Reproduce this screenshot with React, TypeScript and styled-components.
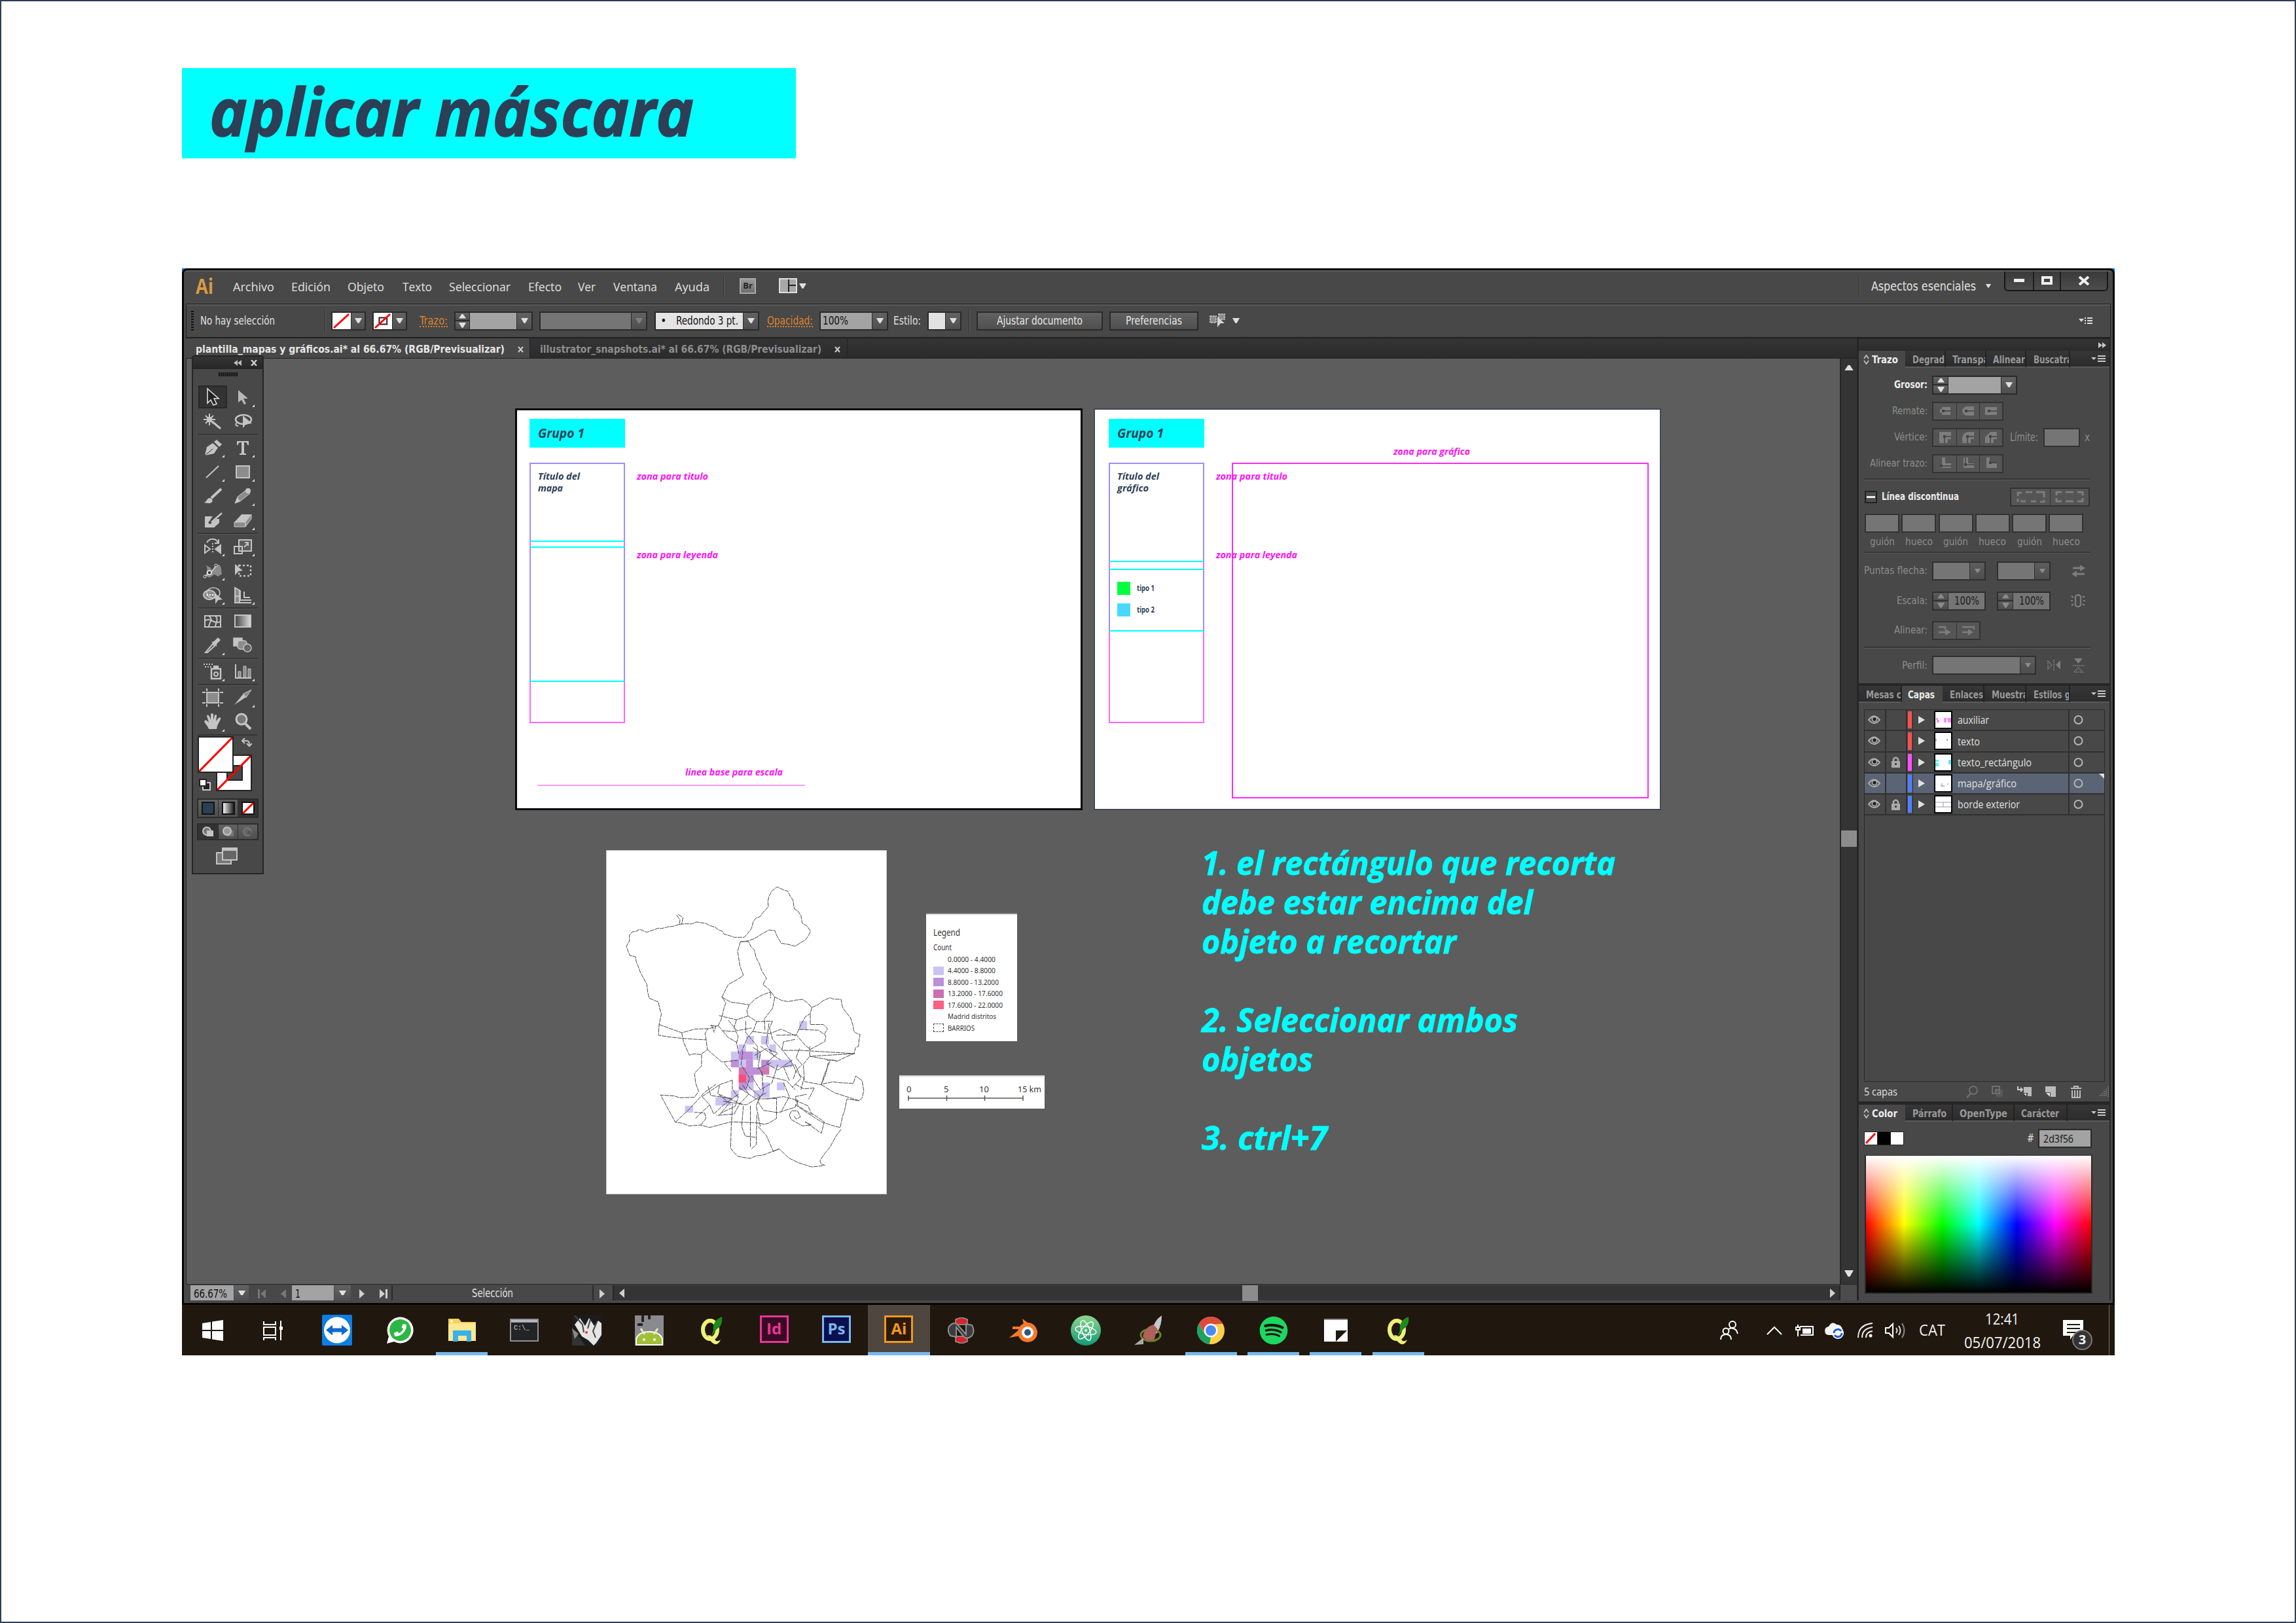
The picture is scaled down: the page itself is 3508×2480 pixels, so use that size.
import React, { useLayoutEffect, useRef, useState } from 'react';
import styled, { createGlobalStyle, css } from 'styled-components';
import { FaSpotify, FaPhoneAlt } from 'react-icons/fa';

const UI = `"DejaVu Sans Condensed", "DejaVu Sans", sans-serif`;
const SEGOE = `"Open Sans", "Noto Sans", sans-serif`;
const HAND = `"Open Sans", "Noto Sans", sans-serif`;
const NAVY = '#2d3f56';
const RAISED = 'linear-gradient(#626262, #4f4f4f)';

const Global = createGlobalStyle`
  html, body { margin: 0; padding: 0; background: #fff; }
  * { box-sizing: border-box; }
  svg { display: block; flex: none; }
`;

/* ---------- text that keeps a given width ---------- */

const FitBox = styled.span<{ $w: number }>`
  display: inline-block;
  flex: none;
  width: ${p => p.$w}px;
  white-space: nowrap;
  line-height: 1.2;
`;
const FitInner = styled.span`
  display: inline-block;
  transform-origin: 0 50%;
`;
function Fit({ w, children }: { w: number; children: React.ReactNode }) {
  const ref = useRef<HTMLSpanElement>(null);
  const [scale, setScale] = useState(1);
  useLayoutEffect(() => {
    const natural = ref.current!.getBoundingClientRect().width;
    if (natural > 0) setScale(w / natural);
  }, []);
  return (
    <FitBox $w={w}>
      <FitInner ref={ref} style={{ transform: `scaleX(${scale})` }}>{children}</FitInner>
    </FitBox>
  );
}

/* ---------- page ---------- */

const Page = styled.main`
  width: 3508px;
  height: 2480px;
  border: 2px solid ${NAVY};
  background: #fff;
  padding: 102px 0 0 276px;
  overflow: hidden;
`;
const Heading = styled.h1`
  margin: 0 0 168px;
  width: 938px;
  height: 138px;
  padding: 0 0 7px 42px;
  background: #00ffff;
  color: ${NAVY};
  display: flex;
  align-items: center;
  font: italic 700 101px ${HAND};
  -webkit-text-stroke: 1.5px ${NAVY};
`;
const Screen = styled.section`
  width: 2953px;
  height: 1661px;
  display: flex;
  flex-direction: column;
  font: 17px ${UI};
  color: #e0e0e0;
`;
const AppWindow = styled.div`
  height: 1584px;
  background: #484848;
  border: 3px solid #050505;
  border-top-left-radius: 8px;
  border-top-right-radius: 8px;
  display: flex;
  flex-direction: column;
  padding: 0 3px 5px;
`;
const Desk = styled.div`background: #0078d7; height: 1584px;`;

/* ---------- menu bar ---------- */

const MenuBar = styled.div`
  height: 51px;
  flex: none;
  margin: 0 -3px;
  padding: 0 0 5px 18px;
  display: flex;
  align-items: center;
  border-top: 2px solid #5e5e5e;
  border-top-left-radius: 6px;
  border-top-right-radius: 6px;
  font: 18.5px ${SEGOE};
`;
const AiLogo = styled.span`
  width: 57px;
  color: #d99a45;
  font: 700 33px ${SEGOE};
  line-height: 1;
`;
const MenuItem = styled.span<{ $w: number }>`width: ${p => p.$w}px; flex: none;`;
const VRule = styled.i<{ $h: number; $m: string }>`
  flex: none;
  width: 2px;
  height: ${p => p.$h}px;
  margin: ${p => p.$m};
  background: #353535;
  border-right: 1px solid #5c5c5c;
`;
const BridgeIcon = styled.span`
  width: 25px;
  height: 24px;
  background: linear-gradient(#989898, #6e6e6e);
  border: 2px solid #a9a9a9;
  color: #222;
  font: 700 13px/19px ${SEGOE};
  text-align: center;
`;
const Workspace = styled.span`margin-left: 17px; width: 175px; font: 19px ${UI};`;
const WinButtons = styled.div`
  display: flex;
  width: 159px;
  height: 30px;
  margin: -14px 0 0 20px;
  background: linear-gradient(#3a3a3a, #4c4c4c);
  border: 2px solid #171717;
  border-top: 0;
  border-radius: 0 0 6px 6px;
`;
const WinButton = styled.span<{ $w: number }>`
  width: ${p => p.$w}px;
  display: flex;
  align-items: center;
  justify-content: center;
  & + & { border-left: 2px solid #1d1d1d; }
`;

/* ---------- control bar ---------- */

const ControlBar = styled.div`
  height: 53px;
  flex: none;
  border: 1px solid #202020;
  border-bottom-width: 2px;
  box-shadow: inset 0 2px #5b5b5b;
  padding-left: 7px;
  display: flex;
  align-items: center;
`;
const Grip = styled.i`
  width: 4px;
  height: 30px;
  background: repeating-linear-gradient(#111 0 2px, #484848 2px 4px);
`;
const Spacer = styled.i<{ $w: number }>`flex: none; width: ${p => p.$w}px;`;
const OrangeLabel = styled.span`
  color: #dd832b;
  border-bottom: 2px dotted #dd832b;
  line-height: 1;
  height: 20px;
`;
const ComboBox = styled.span<{ $w: number; $h?: number; $dim?: boolean }>`
  flex: none;
  width: ${p => p.$w}px;
  height: ${p => p.$h ?? 29}px;
  display: flex;
  border: 2px solid #2a2a2a;
  background: #2a2a2a;
  opacity: ${p => (p.$dim ? 0.82 : 1)};
`;
const Field = styled.span<{ $bg: string; $c?: string }>`
  flex: 1;
  min-width: 0;
  display: flex;
  align-items: center;
  justify-content: center;
  background: ${p => p.$bg};
  color: ${p => p.$c ?? '#111'};
`;
const ArrowBtn = styled.span<{ $w?: number }>`
  width: ${p => p.$w ?? 22}px;
  flex: none;
  margin-left: 1px;
  display: flex;
  align-items: center;
  justify-content: center;
  background: ${RAISED};
`;
const SpinCol = styled.span<{ $w?: number }>`
  width: ${p => p.$w ?? 21}px;
  margin-right: 1px;
  display: flex;
  flex-direction: column;
  gap: 2px;
`;
const SpinHalf = styled.span`
  flex: 1;
  display: flex;
  align-items: center;
  justify-content: center;
  background: ${RAISED};
`;
const PushButton = styled.button<{ $w: number }>`
  width: ${p => p.$w}px;
  height: 29px;
  flex: none;
  margin: 0;
  padding: 0;
  border: 2px solid #2a2a2a;
  background: ${RAISED};
  color: #e6e6e6;
  font: 17px ${UI};
  display: flex;
  align-items: center;
  justify-content: center;
`;

const Down = ({ c = '#e0e0e0', w = 11 }: { c?: string; w?: number }) => (
  <svg width={w} height={w * 0.7} viewBox="0 0 10 7"><path d="M0 0h10L6 7H4z" fill={c} /></svg>
);
const Up = ({ c = '#e0e0e0', w = 11 }: { c?: string; w?: number }) => (
  <svg width={w} height={w * 0.6} viewBox="0 0 10 6"><path d="M0 6h10L6 0H4z" fill={c} /></svg>
);
const SideArrow = ({ left, c = '#d0d0d0', bar }: { left?: boolean; c?: string; bar?: boolean }) => (
  <svg width="14" height="14" viewBox="0 0 14 14">
    <g transform={left ? 'matrix(-1 0 0 1 14 0)' : undefined} fill={c}>
      <path d="M1 0l8 7-8 7z" />{bar && <path d="M10 0h3v14h-3z" />}
    </g>
  </svg>
);
const NoneSwatch = ({ w, h, hole }: { w: number; h: number; hole?: boolean }) => (
  <svg width={w} height={h} viewBox={`0 0 ${w} ${h}`}>
    <rect width={w} height={h} fill="#fff" />
    {hole && <rect x={w * 0.3} y={h * 0.3} width={w * 0.42} height={h * 0.4} fill="none" stroke="#222" strokeWidth="2" />}
    <path d={`M2 ${h - 2}L${w - 3} 2`} stroke="#f00" strokeWidth="3" />
  </svg>
);
const Spinner = ({ w, c }: { w?: number; c?: string }) => (
  <SpinCol $w={w}>
    <SpinHalf><Up c={c} /></SpinHalf>
    <SpinHalf><Down c={c} /></SpinHalf>
  </SpinCol>
);

function Menu() {
  const items: [string, number, number][] = [
    ['Archivo', 63, 89], ['Edición', 60, 86], ['Objeto', 56, 84], ['Texto', 45, 71], ['Seleccionar', 94, 121],
    ['Efecto', 51, 76], ['Ver', 27, 54], ['Ventana', 67, 94], ['Ayuda', 53, 73],
  ];
  return (
    <MenuBar>
      <AiLogo><Fit w={27}>Ai</Fit></AiLogo>
      {items.map(([t, w, slot]) => <MenuItem key={t} $w={slot}><Fit w={w}>{t}</Fit></MenuItem>)}
      <VRule $h={31} $m="0 23px 0 1px" />
      <BridgeIcon>Br</BridgeIcon>
      <Spacer $w={35} />
      <svg width="28" height="24" viewBox="0 0 28 24">
        <path d="M1 1h26v21H1zM15 1v21M15 11h12" fill="#a8a8a8" stroke="#222" strokeWidth="2" />
        <path d="M1 1h26v21H1z" fill="none" stroke="#ddd" strokeWidth="2" />
      </svg>
      <Spacer $w={3} />
      <Down />
      <Spacer $w={1608} />
      <VRule $h={31} $m="0" />
      <Workspace><Fit w={160}>Aspectos esenciales</Fit></Workspace>
      <Down w={8} />
      <WinButtons>
        <WinButton $w={43}><svg width="16" height="6"><rect width="16" height="5" fill="#eee" /></svg></WinButton>
        <WinButton $w={42}><svg width="17" height="14"><rect x="2" y="2" width="13" height="9" fill="none" stroke="#eee" strokeWidth="4" /></svg></WinButton>
        <WinButton $w={74}><svg width="18" height="14"><path d="M2 1l14 12M16 1L2 13" stroke="#eee" strokeWidth="4" /></svg></WinButton>
      </WinButtons>
    </MenuBar>
  );
}

function Controls() {
  return (
    <ControlBar>
      <Grip /><Spacer $w={10} />
      <Fit w={114}>No hay selección</Fit>
      <VRule $h={38} $m="0 8px 0 76px" />
      <ComboBox $w={53}><NoneSwatch w={28} h={25} /><ArrowBtn $w={20}><Down /></ArrowBtn></ComboBox>
      <Spacer $w={10} />
      <ComboBox $w={53}><NoneSwatch w={28} h={25} hole /><ArrowBtn $w={20}><Down /></ArrowBtn></ComboBox>
      <Spacer $w={19} />
      <OrangeLabel><Fit w={43}>Trazo:</Fit></OrangeLabel>
      <Spacer $w={10} />
      <ComboBox $w={120}><Spinner /><Field $bg="#a3a3a3" /><ArrowBtn><Down /></ArrowBtn></ComboBox>
      <Spacer $w={10} />
      <ComboBox $w={165}><Field $bg="#757575" /><ArrowBtn><Down c="#808080" /></ArrowBtn></ComboBox>
      <Spacer $w={11} />
      <ComboBox $w={160}>
        <Field $bg="#e4e4e4">•&nbsp;&nbsp;&nbsp;<Fit w={95}>Redondo 3 pt.</Fit></Field><ArrowBtn><Down /></ArrowBtn>
      </ComboBox>
      <Spacer $w={12} />
      <OrangeLabel><Fit w={70}>Opacidad:</Fit></OrangeLabel>
      <Spacer $w={10} />
      <ComboBox $w={105}><Field $bg="#a3a3a3"><Fit w={39}>100%</Fit><Spacer $w={34} /></Field><ArrowBtn><Down /></ArrowBtn></ComboBox>
      <Spacer $w={8} />
      <Fit w={42}>Estilo:</Fit>
      <Spacer $w={10} />
      <ComboBox $w={52}><Field $bg="#e2e2e2" /><ArrowBtn><Down /></ArrowBtn></ComboBox>
      <VRule $h={38} $m="0 10px 0 11px" />
      <PushButton $w={193}><Fit w={131}>Ajustar documento</Fit></PushButton>
      <Spacer $w={10} />
      <PushButton $w={136}><Fit w={86}>Preferencias</Fit></PushButton>
      <Spacer $w={16} />
      <svg width="27" height="26" viewBox="0 0 27 26">
        <path d="M2 6h9v10H2zM15 3h9v8h-9z" fill="#8a8a8a" stroke="#ccc" strokeWidth="1.5" strokeDasharray="3 1" />
        <path d="M13 7l11 10h-6l-5 6z" fill="#d5d5d5" />
      </svg>
      <Spacer $w={9} />
      <Down />
      <Spacer $w={1282} />
      <svg width="22" height="12" viewBox="0 0 22 12"><path d="M0 3h8L4 8zM9 1h2v2H9zM9 5h2v2H9zM9 9h2v2H9zM13 1h8v2h-8zM13 5h8v2h-8zM13 9h8v2h-8z" fill="#ddd" /></svg>
    </ControlBar>
  );
}

/* ---------- document area ---------- */

const Body = styled.div`display: flex; height: 1470px; flex: none; background: #2a2a2a;`;
const Document = styled.div`width: 2553px; display: flex; flex-direction: column;`;
const TabBar = styled.div`
  height: 31px;
  flex: none;
  display: flex;
  background: linear-gradient(#343434, #2b2b2b);
  border-bottom: 1px solid #222;
`;
const DocTab = styled.div<{ $w: number; $on?: boolean }>`
  width: ${p => p.$w}px;
  padding: 3px 0 0 15px;
  display: flex;
  align-items: center;
  gap: 20px;
  font-weight: 700;
  font-size: 16px;
  color: ${p => (p.$on ? '#e6e6e6' : '#8e8e8e')};
  background: ${p => (p.$on ? '#484848' : 'transparent')};
  border-right: 1px solid #222;
`;
const CanvasRow = styled.div`display: flex; height: 1414px;`;
const Canvas = styled.div`position: relative; width: 2527px; background: #5d5d5d; border-left: 1px solid #222;`;
const VScroll = styled.div`
  width: 26px;
  background: #343434;
  border-left: 2px solid #262626;
  display: flex;
  flex-direction: column;
  align-items: center;
  padding: 10px 0;
`;
const VThumb = styled.i`width: 24px; height: 25px; margin: 703px 0 647px; background: #8c8c8c;`;
const StatusBar = styled.div`
  height: 25px;
  display: flex;
  align-items: stretch;
  background: #484848;
  border-top: 1px solid #262626;
  padding: 1px 0 0 7px;
`;
const StatusField = styled.span<{ $w: number }>`
  width: ${p => p.$w}px;
  background: #a3a3a3;
  color: #111;
  display: flex;
  align-items: center;
  padding: 4px 0 0 5px;
`;
const StatusCell = styled.span<{ $w: number; $line?: boolean }>`
  width: ${p => p.$w}px;
  display: flex;
  align-items: center;
  justify-content: center;
  padding-top: 2px;
  ${p => p.$line && css`border-left: 2px solid #2a2a2a;`}
`;
const HScroll = styled.div`
  flex: 1;
  display: flex;
  align-items: center;
  background: #343434;
  border-left: 2px solid #262626;
  padding-left: 3px;
`;
const HThumb = styled.i`width: 24px; height: 24px; margin: 0 873px 0 943px; background: #8c8c8c;`;
const Corner = styled.i`width: 27px; background: #4c4c4c; border-left: 2px solid #262626;`;

/* artboards sit freely on the canvas */
type Box = { $x: number; $y: number; $w: number; $h: number };
const placed = css<Box>`
  position: absolute;
  left: ${p => p.$x}px;
  top: ${p => p.$y}px;
  width: ${p => p.$w}px;
  height: ${p => p.$h}px;
`;
const Artboard = styled.div<Box & { $edge: string }>`${placed} background: #fff; border: ${p => p.$edge};`;
const Frame = styled.div<Box & { $c: string; $side?: string }>`
  ${placed}
  border: 2px solid ${p => p.$c};
  border-left-color: ${p => p.$side ?? p.$c};
  border-right-color: ${p => p.$side ?? p.$c};
`;
const TopEdge = styled.i<{ $x: number; $y: number }>`
  position: absolute;
  left: ${p => p.$x}px;
  top: ${p => p.$y}px;
  width: 146px;
  height: 2px;
  background: #a08bff;
`;
const GroupTag = styled.div<Box>`
  ${placed}
  background: #00ffff;
  color: ${NAVY};
  display: flex;
  align-items: center;
  padding-left: 13px;
  font: italic 700 19px ${HAND};
`;
const Caption = styled.div<{ $x: number; $y: number; $c?: string }>`
  position: absolute;
  left: ${p => p.$x}px;
  top: ${p => p.$y - 10}px;
  color: ${p => p.$c ?? '#ff12f5'};
  font: italic 700 15px/17px ${HAND};
  white-space: nowrap;
  display: flex;
  flex-direction: column;
`;
const Baseline = styled.i<{ $x: number; $y: number; $w: number }>`
  position: absolute;
  left: ${p => p.$x}px;
  top: ${p => p.$y}px;
  width: ${p => p.$w}px;
  height: 2px;
  background: #ff9bfb;
`;
const KeyList = styled.div`
  position: absolute;
  left: 34px;
  top: 263px;
  display: flex;
  flex-direction: column;
  gap: 13px;
  color: ${NAVY};
  font: 700 12px ${HAND};
`;
const KeyRow = styled.div`display: flex; align-items: center; gap: 10px; height: 20px;`;
const KeySwatch = styled.i<{ $c: string }>`width: 20px; height: 20px; background: ${p => p.$c};`;
const Steps = styled.div`
  position: absolute;
  left: 1551px;
  top: 740px;
  color: #00ffff;
  font: italic 700 50px/60px ${HAND};
  -webkit-text-stroke: 0.8px #00ffff;
  display: flex;
  flex-direction: column;
`;
const Step = styled.div`height: 60px; display: flex; align-items: center;`;

const MapSheet = styled.div`
  position: absolute;
  left: 641px;
  top: 751px;
  width: 429px;
  height: 526px;
  background: #fff;
  border: 1px solid #c8c8c8;
`;
const LegendCard = styled.div`
  position: absolute;
  left: 1130px;
  top: 847px;
  width: 139px;
  height: 196px;
  background: #fff;
  border-top: 2px solid #888;
  padding: 18px 0 0 11px;
  color: #333;
  font: 11.5px "Noto Sans", sans-serif;
`;
const LegendTitle = styled.div<{ $s: number; $h: number }>`
  font-size: ${p => p.$s}px;
  height: ${p => p.$h}px;
`;
const LegendRow = styled.div`height: 17.5px; display: flex; align-items: center; gap: 6px;`;
const LegendSwatch = styled.i<{ $c: string; $b?: string }>`
  width: 16px;
  height: 13px;
  background: ${p => p.$c};
  border: ${p => p.$b ?? 'none'};
`;
const ScaleCard = styled.div`
  position: absolute;
  left: 1089px;
  top: 1095px;
  width: 222px;
  height: 51px;
  background: #fff;
  border-top: 2px solid #ccc;
  color: #333;
  font: 13px "Noto Sans", sans-serif;
  padding: 11px 0 0 11px;
`;
const ScaleLabels = styled.div`display: flex; align-items: center; height: 18px;`;
const ScaleLabel = styled.span<{ $w: number }>`width: ${p => p.$w}px; line-height: 1.2;`;

const CELLS: [number, number, number, number, string][] = [
  [674, 770, 27, 38, '#b9acef'], [492, 835, 26, 37, '#b9acef'], [543, 835, 27, 37, '#b9acef'], [465, 872, 26, 34, '#b9acef'],
  [571, 872, 23, 34, '#b9acef'], [439, 903, 28, 36, '#b9acef'], [466, 903, 48, 36, '#a266cb'], [514, 903, 27, 36, '#b9acef'],
  [439, 939, 28, 33, '#a266cb'], [467, 939, 24, 33, '#b9acef'], [491, 939, 24, 33, '#a266cb'], [543, 939, 28, 33, '#a266cb'],
  [571, 939, 78, 33, '#b9acef'], [466, 972, 25, 32, '#c04099'], [491, 972, 52, 32, '#a266cb'], [543, 972, 28, 32, '#c04099'],
  [466, 1004, 25, 34, '#fb2a5f'], [491, 1004, 26, 34, '#a266cb'], [466, 1038, 26, 34, '#a266cb'], [492, 1038, 25, 34, '#b9acef'],
  [544, 1038, 28, 34, '#b9acef'], [597, 1038, 27, 34, '#b9acef'], [439, 1072, 27, 32, '#b9acef'], [518, 1072, 54, 32, '#b9acef'],
  [386, 1103, 54, 36, '#b9acef'], [281, 1140, 28, 30, '#b9acef'],
];
const BORDERS = [
  'M262 347l-22 9-20 3-20 7-10-2-40 18-12-6-13-7-14 10-11 1-10 15v25l-6 12-4 13 6 22 6 17 18 4 4 24 6 18 8 28 5 12 17 40 3 34 5 26 32 17 4 28 6 25-8 45-2 47 40 8 40 5 40 4 45 3',
  'M262 347l21-2 20 1 17-9 32 6 15 10 18 7 12 12 13 6 5 12 18 6 17 8h35l10-14 15-25 6-30 9-15 14-6 10-18 19-26-2-22 4-23 10-24 18-17 20 12 17 7 8 22 9 15 5 40 12 8 11 22 4 32 16 12 13 24-8 20-10 17-18 14-17 14-24-8-24-5-14-30-8-25-20-3-25 18-25 20-24 10-24 3',
  'M252 306l12 22-2 19M258 304l16 14-4 28',
  'M472 423l-10 42 4 30 4 35 12 40-20 18-32 22-12 30-10 25 14 25-6 20-6 30-4 22-11 28',
  'M472 423h28l8 22 12 15 5 30 12 30 8 30 17 35-8 12-4 15 12 10 13 18 15 25 22 14 23 6 24-6 26-4 14 12 18 23 20-10 20-20 23-12 12 6 26 1 3 26 4 14 12 20 13 20 8 30 4 30 11 10 10 3-4 30-1 22-10 6-6 26-30 16-27 17-20-6-15 4',
  'M408 665l30 22 34 6 30 6 20-25 25-18 30-14M502 699l-8 25 4 24 30 24 54-2M590 665l-8 50-28 45 2 50M498 748l-40 16-60-18M458 764l-8 36 14 36-6 34',
  'M717 710l-5 28-16 12-14 30-18 50 28 42 20 22 50-35 4-25-26-24-70-4M712 740v45h45l14 18-10 24M664 830l-70 2M528 772l-12 40-20 30-20 60M582 770l-10 30 10 50 34 46 30 50 20 50',
  'M192 785l78 36 45-16 50-2 30-13M270 821l6 40 20 58 16-6 24 3 22-22-4-42-4-28 10-22M338 916v50l-20 26-4 10 4 40 10 35-14 26-50 2-20-8-47-4 51 119 24 4 23 12 40-4 30 11 75-25 45 2 45 3 25 6 15-6 26-20v-90',
  'M358 894l50 55 55-8M372 786l10 34M368 790h20l-6 22M395 790l16 22 42 4M620 898h60l185 14-155 12 95 21M710 880v44l-22 35 4 75 58 14 16-50 8-50',
  'M755 1045l35-10 30 5 40 2 8-32 22 20 6 45-6 30-10 13-42-8-8 50-8 30-7 45-30-10-35-15-50-40-40-35M750 1048l45 35 85 35',
  'M818 1243l-18 30-20 47-18 28-17 32 4 14 13 6-20 4-26 3-24-10-22-9-32-20-33-40-28 14-27 13-25 4-20 11-22-4-21-6-14-18-10-17 2-90 5-105M605 1328l-20 12-24-70-30-42',
  'M340 1100l60-52 44-20M340 1100l26 36-50 60M248 1212l50-60 50-70 40-36M366 1136l14 40 34-40 50-46M335 1224l18-28-4-24-36-4',
  'M360 1055l10 40 76 14M400 1048l-6 40 40 40-36 54M444 1028v40l20 34-10 40-50 30M480 1050l20 40-30 40-20 46-60 6',
  'M506 1140v180M528 1180l-2 130-16 18M482 1140l-6 90 12 42 38 6M540 1230l-14-90 14-40-34-36-24-40',
  'M520 920l40-30 40 20-40 44 40 30 50-44M540 880l70 60M530 980l50-30M600 960l-20 80-40 30-30-60M560 1010l70 20 30 40M545 990l6 90-20 40 20 40 50 10',
  'M575 640v30M620 1040l20 60-30 70M560 1110l60-10 50 16-10 30-60 24M640 1030l-20-60 40-10 20 60-30 40M660 1046l30 20 36-4-20 50',
  'M640 1180l6 20 40 28 30-4-22-14 56 50 10-50-46-40-10-30-44-24M640 1180l8-18h20l10 26-14 10-10-16',
  'M675 890l-12 40 20 30-20 26-10 40M660 850l-40 10-6 40M780 945l-20 60-10 42M512 815l60 10 40-20 50 30M570 780l-10 90 30 60M490 770v50l40 60v60',
  'M440 990l-20-30-2-10M480 900l-6 60 30 60-14 50M515 885l26 22-8 60 18 44M466 1060l60 50 70-2M412 1120l80 16 70-54M398 1090l80 44',
  'M410 812l20 30 28 20 8 50M430 766l30 46 50-12M670 1000l20 20-10 50M720 1180l-50-40-10-40 40-10',
];

function CityMap() {
  return (
    <svg width="427" height="524" viewBox="12 26 961 1498" preserveAspectRatio="none">
      {CELLS.map(([x, y, w, h, c], i) => <rect key={i} x={x} y={y} width={w} height={h} fill={c} fillOpacity=".72" />)}
      <g fill="none" stroke="#484848" strokeWidth="1" strokeDasharray="7 1" strokeLinejoin="round">
        {BORDERS.map((d, i) => <path key={i} d={d} vectorEffect="non-scaling-stroke" />)}
      </g>
      <rect x="466" y="1004" width="25" height="34" fill="#fb4f78" />
    </svg>
  );
}

/* ---------- floating toolbox ---------- */

const Toolbox = styled.div`
  position: absolute;
  left: 8px;
  top: -5px;
  width: 110px;
  height: 793px;
  background: #484848;
  border: 2px solid #252525;
  border-radius: 4px 4px 0 0;
  display: flex;
  flex-direction: column;
  align-items: center;
`;
const ToolboxHead = styled.div`
  align-self: stretch;
  height: 19px;
  flex: none;
  background: linear-gradient(#343434, #262626);
  display: flex;
  align-items: center;
  justify-content: flex-end;
  gap: 14px;
  padding-right: 8px;
`;
const ToolboxGrip = styled.i`
  width: 29px;
  height: 6px;
  margin: 5px 0 13px;
  flex: none;
  background: repeating-linear-gradient(90deg, #111 0 2px, #484848 2px 3px);
`;
const ToolGroup = styled.div`
  display: grid;
  grid-template-columns: 46px 46px;
  grid-auto-rows: 37px;
  flex: none;
  padding-bottom: 1px;
  & + & { border-top: 2px solid #363636; box-shadow: inset 0 1px #565656; }
`;
const Tool = styled.span<{ $on?: boolean }>`
  position: relative;
  display: flex;
  align-items: center;
  justify-content: center;
  ${p => p.$on && css`background: #333; box-shadow: inset 0 0 0 2px #282828; margin: 1px;`}
`;
const More = styled.i`
  position: absolute;
  right: 5px;
  bottom: 3px;
  border: 2px solid transparent;
  border-right-color: #ddd;
  border-bottom-color: #ddd;
`;
const Paint = styled.div`
  position: relative;
  width: 92px;
  height: 96px;
  flex: none;
  border-top: 2px solid #363636;
`;
const FillSq = styled.div<{ $x: number; $y: number }>`
  position: absolute;
  left: ${p => p.$x}px;
  top: ${p => p.$y}px;
  border: 2px solid #222;
`;
const Glyph = styled.div<{ $x: number; $y: number }>`position: absolute; left: ${p => p.$x}px; top: ${p => p.$y}px;`;
const ModeRow = styled.div<{ $h: number; $mt: number }>`
  display: flex;
  flex: none;
  height: ${p => p.$h}px;
  margin-top: ${p => p.$mt}px;
  border: 2px solid #2c2c2c;
`;
const Mode = styled.span<{ $on?: boolean }>`
  width: 30px;
  display: flex;
  align-items: center;
  justify-content: center;
  background: ${p => (p.$on ? '#333' : RAISED)};
  & + & { border-left: 1px solid #2c2c2c; }
`;
const ScreenMode = styled.div`margin: 11px 4px 0 0;`;

const L = '#c4c4c4';
const M = '#8c8c8c';
const TOOL_ART: Record<string, React.ReactNode> = {
  select: <path d="M-8-13V9l5-5 4 8 5-2-4-8h7z" fill="#222" stroke="#ddd" strokeWidth="1.6" />,
  direct: <path d="M-7-11V8l5-4 4 7 3-1-4-8h7z" fill="#b8b8b8" />,
  wand: <g stroke={L}><path d="M-1 0L12 11" strokeWidth="3" /><path d="M-5-12V6M-14-3H4M-11-9l12 12M-11 3L1-9" strokeWidth="2" /><circle cx="-5" cy="-3" r="4" fill={L} /></g>,
  lasso: <g><ellipse cx="1" cy="-3" rx="12" ry="7" fill="none" stroke={L} strokeWidth="2.5" /><path d="M-9 2c-4 3 0 6 2 4" stroke={L} fill="none" strokeWidth="2" /><path d="M0-9V10l5-6 9-1z" fill={L} /></g>,
  pen: <g><path d="M-12 12l3-13 9-6 8 7-6 9z" fill={L} /><path d="M2-9l4-3 8 7-4 4z" fill={L} /><path d="M-12 12L0 2" stroke="#333" /></g>,
  type: <path d="M-9-10H9v6H7c0-3-1-4-4-4H2V7c0 2 1 2 3 2v2H-5V9c2 0 3 0 3-2V-8h-1c-3 0-4 1-4 4h-2z" fill={L} />,
  line: <path d="M-10 9L9-9" stroke={L} strokeWidth="2" />,
  rect: <rect x="-10" y="-9" width="20" height="18" fill={M} stroke={L} strokeWidth="2" />,
  brush: <g><path d="M-2 3L13-11" stroke={L} strokeWidth="4" /><path d="M-14 10c5 0 5-8 10-7s5 8-2 8z" fill={L} /></g>,
  pencil: <g><path d="M-12 11l4-10L6-10l5 6L-4 8z" fill={M} stroke={L} /><circle cx="8" cy="-8" r="4" fill={L} /><path d="M-12 11l4-9 4 6z" fill={L} /></g>,
  blob: <g><path d="M-12-6h12L-7 4l3 2 10-8h4v6L2 11h-14z" fill={L} /><path d="M14-11L-2 3" stroke={L} strokeWidth="2.5" /></g>,
  eraser: <g><path d="M-13 3L-2-9h15L4 3z" fill={L} /><path d="M-13 3H4v7h-17zM4 3l9-12v7L4 10z" fill={M} stroke={L} /></g>,
  rotate: <g fill="none" stroke={L} strokeWidth="2"><path d="M-9-6c4-7 14-7 17 0M9-11v6h-6" /><path d="M-12-2l8 6-8 6z" /><path d="M12-2L4 4l8 6z" fill={L} /><path d="M0-5v16" strokeDasharray="2 2" /></g>,
  scale: <g fill="#5c5c5c" stroke={L} strokeWidth="2"><rect x="-6" y="-10" width="19" height="17" /><rect x="-13" y="0" width="12" height="11" fill="none" /><path d="M2 1l6-6M3-6h5v5" fill="none" /></g>,
  width: <g><path d="M-11-9c5 4 9 3 9 8 5 3 5-8 11-8 4 0 4 8 5 14l-6 4c-6-5-6-3-10 0s-8 0-8-4 4-8-1-14z" fill={M} /><path d="M-12 9C-8 4-2 6 5-8" stroke={L} strokeWidth="2" fill="none" /><circle cx="-5" cy="3" r="3" fill="#333" stroke="#eee" strokeWidth="1.5" /><circle cx="5" cy="-8" r="2" fill="#333" stroke="#eee" /><circle cx="-12" cy="9" r="2" fill="#333" stroke="#eee" /></g>,
  free: <g><rect x="-6" y="-8" width="18" height="16" fill="none" stroke={L} strokeWidth="2.5" strokeDasharray="3 3" /><path d="M-12-10L0 0l-7 1-5 6z" fill={L} /></g>,
  builder: <g><ellipse cx="-5" cy="0" rx="9" ry="7" fill={M} stroke={L} strokeWidth="2" /><ellipse cx="1" cy="-3" rx="10" ry="8" fill="none" stroke={L} strokeWidth="1.5" /><path d="M-9 0H4" stroke="#fff" strokeWidth="2" strokeDasharray="2 2" /><path d="M4-2l11 9-7 1-4 6z" fill={L} /></g>,
  persp: <g fill="none" stroke={L} strokeWidth="2"><path d="M-4-7V8h17M2-5V4h9M-13 12H13" /><path d="M-12-11l7 4V12h-7z" fill={M} /><path d="M-12 2h7" /></g>,
  mesh: <g fill="none" stroke={L} strokeWidth="2"><rect x="-12" y="-8" width="24" height="17" /><path d="M-12 0c8-8 16 8 24 0M-6-8c8 6 0 10 0 17M4-8c6 6 0 10 0 17" /></g>,
  eyedrop: <g><path d="M-11 11L0-2l3 3L-8 11z" fill="none" stroke={L} strokeWidth="2" /><path d="M-2-5l4-1 6-6 4 4-6 6v4z" fill={L} /></g>,
  blend: <g stroke={L} strokeWidth="1.5"><rect x="-14" y="-11" width="13" height="12" fill={L} /><rect x="-8" y="-7" width="14" height="13" rx="4" fill={M} /><ellipse cx="7" cy="4" rx="6" ry="6" fill="#666" /></g>,
  spray: <g><rect x="-2" y="-4" width="14" height="15" fill="none" stroke={L} strokeWidth="2.5" /><path d="M1-9h8v4H1z" fill={L} /><circle cx="5" cy="4" r="3" fill="none" stroke={L} strokeWidth="2" /><path d="M-14-11h14M-12-7H0" stroke={L} strokeWidth="2" strokeDasharray="2 2" /></g>,
  graph: <g><path d="M-11-11V10H13" fill="none" stroke={L} strokeWidth="2" /><path d="M-7 0h4v9h-4zM1-8h4V9H1zM8-4h4V9H8z" fill={M} stroke={L} /></g>,
  board: <g stroke={L} strokeWidth="2"><path d="M-16-8h5M11-8h5M-16 8h5M11 8h5M-9-14v4M9-14v4M-9 10v4M9 10v4" /><rect x="-9" y="-8" width="18" height="16" fill={M} /></g>,
  slice: <g><path d="M-13 11L1-6l4 5z" fill={L} /><path d="M1-6l12-6L5 0z" fill={M} stroke={L} /></g>,
  hand: <path d="M-6 11C-8 5-15 0-12-2s5 3 6 3l-3-10c1-3 3-1 4 1l2 5V-11c1-3 4-2 4 0v8l2-7c1-2 4-1 3 1L5-1l4-5c2-2 4 0 3 2L7 6l-1 5z" fill={L} />,
  zoom: <g><ellipse cx="-2" cy="-4" rx="8" ry="8" fill="#777" stroke={L} strokeWidth="3" /><path d="M4 3l8 8" stroke={L} strokeWidth="4" /></g>,
};
const GradientTool = () => (
  <svg width="26" height="20">
    <defs><linearGradient id="grad"><stop stopColor="#444" /><stop offset="1" stopColor="#ddd" /></linearGradient></defs>
    <rect x="1" y="1" width="24" height="18" fill="url(#grad)" stroke={L} strokeWidth="2" />
  </svg>
);
const GROUPS = [
  ['select', 'direct+', 'wand', 'lasso'],
  ['pen+', 'type+', 'line+', 'rect+', 'brush', 'pencil+', 'blob', 'eraser+'],
  ['rotate+', 'scale+', 'width+', 'free', 'builder+', 'persp+'],
  ['mesh', 'gradient', 'eyedrop+', 'blend'],
  ['spray+', 'graph+'],
  ['board', 'slice+', 'hand+', 'zoom'],
];

function Tools() {
  return (
    <Toolbox>
      <ToolboxHead>
        <svg width="12" height="9"><path d="M6 0L0 4.500l6 4.500zM12 0L6 4.500l6 4.500z" fill="#bbb" /></svg>
        <svg width="10" height="9"><path d="M1 0l8 9M9 0L1 9" stroke="#ccc" strokeWidth="2.500" /></svg>
      </ToolboxHead>
      <ToolboxGrip />
      {GROUPS.map((g, i) => (
        <ToolGroup key={i}>
          {g.map(name => {
            const key = name.replace('+', '');
            return (
              <Tool key={key} $on={key === 'select'}>
                {key === 'gradient' ? <GradientTool /> : <svg width="32" height="30" viewBox="-16 -15 32 30">{TOOL_ART[key]}</svg>}
                {name.endsWith('+') && <More />}
              </Tool>
            );
          })}
        </ToolGroup>
      ))}
      <Paint>
        <FillSq $x={28} $y={29}>
          <svg width="51" height="52"><rect width="51" height="52" fill="#fff" /><rect x="15" y="15" width="23" height="22" fill="#484848" stroke="#222" strokeWidth="2" /><path d="M0 52L51 0" stroke="#f00" strokeWidth="3" /></svg>
        </FillSq>
        <FillSq $x={0} $y={1}>
          <svg width="51" height="52"><rect width="51" height="52" fill="#fff" /><path d="M0 52L51 0" stroke="#f00" strokeWidth="3" /></svg>
        </FillSq>
        <Glyph $x={67} $y={3}><svg width="16" height="15"><path d="M3 5h5q4 0 4 6M5 1L1 5l4 4M8 9l4 4 4-4" fill="none" stroke={L} strokeWidth="2" /></svg></Glyph>
        <Glyph $x={1} $y={65}><svg width="19" height="20"><rect x="7" y="7" width="11" height="11" fill="#222" stroke="#ccc" strokeWidth="2" /><rect x="2" y="2" width="10" height="10" fill="#fff" stroke="#222" strokeWidth="2" /></svg></Glyph>
      </Paint>
      <ModeRow $h={30} $mt={2}>
        <Mode><svg width="20" height="20"><rect x="1" y="1" width="18" height="18" fill={NAVY} stroke="#111" strokeWidth="2" /></svg></Mode>
        <Mode>
          <svg width="20" height="20"><defs><linearGradient id="bw"><stop stopColor="#fff" /><stop offset="1" stopColor="#111" /></linearGradient></defs><rect x="1" y="1" width="18" height="18" fill="url(#bw)" stroke="#111" strokeWidth="2" /></svg>
        </Mode>
        <Mode $on><svg width="20" height="20"><rect x="1" y="1" width="18" height="18" fill="#fff" stroke="#111" strokeWidth="2" /><path d="M2 18L18 2" stroke="#f00" strokeWidth="3" /></svg></Mode>
      </ModeRow>
      <ModeRow $h={26} $mt={8}>
        <Mode $on><svg width="18" height="16"><ellipse cx="7" cy="7" rx="6" ry="6" fill="#777" stroke={L} strokeWidth="2" /><rect x="7" y="6" width="10" height="9" fill={L} /></svg></Mode>
        <Mode><svg width="18" height="16"><rect x="7" y="6" width="10" height="9" fill="#777" /><ellipse cx="7" cy="7" rx="6" ry="6" fill="#999" stroke={L} strokeWidth="2" /></svg></Mode>
        <Mode><svg width="18" height="16"><ellipse cx="8" cy="8" rx="6" ry="6" fill="#666" stroke="#777" strokeWidth="2" /><rect x="8" y="7" width="6" height="5" fill="#555" /></svg></Mode>
      </ModeRow>
      <ScreenMode>
        <svg width="33" height="27"><rect x="1" y="8" width="22" height="17" fill="#777" stroke={L} strokeWidth="2" /><rect x="10" y="1" width="22" height="18" fill="#666" stroke={L} strokeWidth="2" /><path d="M10 3h22" stroke={L} strokeWidth="4" /></svg>
      </ScreenMode>
    </Toolbox>
  );
}

function CanvasArea() {
  const violet = '#a08bff';
  return (
    <Canvas>
      {/* map template */}
      <Artboard $x={502} $y={76} $w={867} $h={614} $edge="3px solid #05070c">
        <GroupTag $x={19} $y={13} $w={146} $h={44}><Fit w={71}>Grupo 1</Fit></GroupTag>
        <Frame $x={19} $y={80} $w={146} $h={398} $c="#ff66fb" />
        <Frame $x={19} $y={80} $w={146} $h={121} $c="#00ffff" $side={violet} />
        <Frame $x={19} $y={208} $w={146} $h={207} $c="#00ffff" $side={violet} />
        <TopEdge $x={19} $y={80} />
        <Caption $x={32} $y={101} $c={NAVY}><Fit w={64}>Título del</Fit><Fit w={38}>mapa</Fit></Caption>
        <Caption $x={183} $y={101}><Fit w={109}>zona para titulo</Fit></Caption>
        <Caption $x={183} $y={221}><Fit w={124}>zona para leyenda</Fit></Caption>
        <Caption $x={257} $y={553}><Fit w={149}>linea base para escala</Fit></Caption>
        <Baseline $x={31} $y={572} $w={409} />
      </Artboard>
      {/* chart template */}
      <Artboard $x={1386} $y={76} $w={867} $h={614} $edge="2px solid #3f4857">
        <GroupTag $x={21} $y={14} $w={146} $h={44}><Fit w={71}>Grupo 1</Fit></GroupTag>
        <Frame $x={21} $y={81} $w={146} $h={398} $c="#ff66fb" />
        <Frame $x={21} $y={81} $w={146} $h={152} $c="#00ffff" $side={violet} />
        <Frame $x={21} $y={243} $w={146} $h={96} $c="#00ffff" $side={violet} />
        <TopEdge $x={21} $y={81} />
        <Caption $x={34} $y={102} $c={NAVY}><Fit w={64}>Título del</Fit><Fit w={48}>gráfico</Fit></Caption>
        <KeyList>
          <KeyRow><KeySwatch $c="#00ff3c" /><Fit w={27}>tipo 1</Fit></KeyRow>
          <KeyRow><KeySwatch $c="#47d9ff" /><Fit w={27}>tipo 2</Fit></KeyRow>
        </KeyList>
        <Frame $x={209} $y={81} $w={637} $h={513} $c="#ff2bf6" />
        <Caption $x={456} $y={64}><Fit w={117}>zona para gráfico</Fit></Caption>
        <Caption $x={185} $y={102}><Fit w={109}>zona para titulo</Fit></Caption>
        <Caption $x={185} $y={222}><Fit w={124}>zona para leyenda</Fit></Caption>
      </Artboard>

      <MapSheet><CityMap /></MapSheet>
      <LegendCard>
        <LegendTitle $s={14} $h={24}><Fit w={41}>Legend</Fit></LegendTitle>
        <LegendTitle $s={12} $h={18}><Fit w={28}>Count</Fit></LegendTitle>
        <LegendRow><LegendSwatch $c="#fff" /><Fit w={73}>0.0000 - 4.4000</Fit></LegendRow>
        <LegendRow><LegendSwatch $c="#cbc3f4" /><Fit w={73}>4.4000 - 8.8000</Fit></LegendRow>
        <LegendRow><LegendSwatch $c="#ba90d9" /><Fit w={78}>8.8000 - 13.2000</Fit></LegendRow>
        <LegendRow><LegendSwatch $c="#cc6fb2" /><Fit w={84}>13.2000 - 17.6000</Fit></LegendRow>
        <LegendRow><LegendSwatch $c="#fb5f81" /><Fit w={84}>17.6000 - 22.0000</Fit></LegendRow>
        <LegendRow><LegendSwatch $c="#fff" /><Fit w={74}>Madrid distritos</Fit></LegendRow>
        <LegendRow><LegendSwatch $c="#fff" $b="1px dashed #444" /><Fit w={41}>BARRIOS</Fit></LegendRow>
      </LegendCard>
      <ScaleCard>
        <ScaleLabels>
          <ScaleLabel $w={57}>0</ScaleLabel><ScaleLabel $w={54}>5</ScaleLabel><ScaleLabel $w={59}>10</ScaleLabel><Fit w={36}>15 km</Fit>
        </ScaleLabels>
        <svg width="180" height="9"><path d="M3 0v8M61.500 0v8M119.500 0v8M178 0v8M3 4H178" stroke="#555" strokeWidth="1.500" /></svg>
      </ScaleCard>
      <Steps>
        <Step><Fit w={632}>1. el rectángulo que recorta</Fit></Step>
        <Step><Fit w={506}>debe estar encima del</Fit></Step>
        <Step><Fit w={389}>objeto a recortar</Fit></Step>
        <Step />
        <Step><Fit w={483}>2. Seleccionar ambos</Fit></Step>
        <Step><Fit w={170}>objetos</Fit></Step>
        <Step />
        <Step><Fit w={192}>3. ctrl+7</Fit></Step>
      </Steps>
      <Tools />
    </Canvas>
  );
}

/* ---------- right-hand dock ---------- */

const Dock = styled.aside`
  width: 387px;
  padding: 1px 1px 0 3px;
  display: flex;
  flex-direction: column;
  background: #262626;
`;
const DockHead = styled.div`
  height: 18px;
  flex: none;
  background: linear-gradient(#353535, #2b2b2b);
  display: flex;
  align-items: center;
  justify-content: flex-end;
  padding-right: 5px;
`;
const Tabs = styled.div`
  height: 26px;
  flex: none;
  display: flex;
  background: linear-gradient(#363636, #2b2b2b);
  box-shadow: inset 0 -2px #5a5a5a;
  font-weight: 700;
  font-size: 16px;
`;
const PanelTab = styled.span<{ $w: number; $pad: number; $on?: boolean }>`
  width: ${p => p.$w}px;
  flex: none;
  padding: 3px 0 0 ${p => p.$pad}px;
  overflow: hidden;
  display: flex;
  align-items: center;
  gap: 4px;
  color: ${p => (p.$on ? '#ececec' : '#989898')};
  background: ${p => (p.$on ? '#484848' : 'linear-gradient(#363636, #2b2b2b)')};
  border-right: 2px solid ${p => (p.$on ? '#484848' : '#222')};
  border-bottom: 2px solid ${p => (p.$on ? '#484848' : '#5a5a5a')};
`;
const TabMenu = styled.span`margin-left: auto; padding-right: 6px; display: flex; align-items: center;`;
const Panel = styled.div<{ $h: number; $mb?: number }>`
  height: ${p => p.$h}px;
  flex: none;
  margin-bottom: ${p => p.$mb ?? 0}px;
  background: #484848;
  display: flex;
  flex-direction: column;
`;

type TabDef = { t: string; w: number; tw: number; pad: number; on?: boolean; knob?: boolean };
function TabStrip({ tabs }: { tabs: TabDef[] }) {
  return (
    <Tabs>
      {tabs.map(d => (
        <PanelTab key={d.t} $w={d.w} $pad={d.pad} $on={d.on}>
          {d.knob && <svg width="9" height="15"><path d="M1 6l3.500-5L8 6M1 9l3.500 5L8 9" fill="none" stroke="#bbb" strokeWidth="1.800" /></svg>}
          <Fit w={d.tw}>{d.t}</Fit>
        </PanelTab>
      ))}
      <TabMenu><svg width="22" height="14"><path d="M0 4h8L4 8zM10 1h12v2H10zM10 5h12v2H10zM10 9h12v2H10z" fill="#c8c8c8" /></svg></TabMenu>
    </Tabs>
  );
}

const StrokeBody = styled(Panel)`padding-top: 6px;`;
const Row = styled.div<{ $h: number }>`
  height: ${p => p.$h}px;
  flex: none;
  display: flex;
  align-items: center;
  color: #8c8c8c;
`;
const Label = styled.span<{ $on?: boolean }>`
  width: 105px;
  margin-right: 7px;
  display: flex;
  justify-content: flex-end;
  color: ${p => (p.$on ? '#ececec' : '#8c8c8c')};
  font-size: 16px;
  font-weight: ${p => (p.$on ? 700 : 400)};
`;
const CheckLabel = styled.span`
  width: 196px;
  flex: none;
  color: #ececec;
  font-size: 16px;
  font-weight: 700;
`;
const HRule = styled.div<{ $h: number }>`
  height: ${p => p.$h}px;
  flex: none;
  margin: 0 29px 0 8px;
  display: flex;
  align-items: center;
  &::before { content: ''; flex: 1; height: 2px; background: #353535; border-bottom: 1px solid #5c5c5c; }
`;
const Segments = styled.span`display: flex; flex: none; height: 29px; border: 2px solid #333;`;
const Segment = styled.span<{ $w?: number }>`
  width: ${p => p.$w ?? 35}px;
  display: flex;
  align-items: center;
  justify-content: center;
  background: #555;
  & + & { border-left: 1px solid #333; }
`;
const Flat = styled.span<{ $w: number }>`
  width: ${p => p.$w}px;
  height: 29px;
  background: #757575;
  border: 2px solid #323232;
`;
const Check = styled.span`
  width: 19px;
  height: 19px;
  flex: none;
  margin: 0 7px 0 9px;
  border: 2px solid #222;
  background: #4d4d4d;
  display: flex;
  align-items: center;
  justify-content: center;
`;
const DashGrid = styled.div`
  display: grid;
  flex: none;
  grid-template-columns: repeat(6, 53px);
  column-gap: 3.3px;
  margin-left: 9px;
  padding-top: 3px;
`;
const DashCell = styled.div`
  display: flex;
  flex-direction: column;
  align-items: center;
  color: #8c8c8c;
  font-size: 16px;
  height: 55px;
  gap: 4px;
`;
const G = '#7d7d7d';
const Cap = ({ d }: { d: string }) => (
  <svg width="18" height="18" viewBox="0 0 18 18"><path d={d} fill={G} /><path d="M6 9h12" stroke="#444" strokeWidth="1.500" /><rect x="4" y="7" width="4" height="4" fill="#444" /></svg>
);
const Join = ({ d }: { d: string }) => (
  <svg width="18" height="18" viewBox="0 0 18 18"><path d={d} fill={G} /><path d="M8 18V8h10" fill="none" stroke="#444" strokeWidth="1.500" /><rect x="6" y="6" width="4" height="4" fill="#444" /></svg>
);
const Align = ({ x }: { x: number }) => (
  <svg width="18" height="18" viewBox="0 0 18 18"><path d="M2 0h7v9h9v7H2z" fill={G} /><path d={`M${x} 0v${16 - x}h${18 - x}`} fill="none" stroke="#444" strokeWidth="1.500" /><rect x={x - 2} y={14 - x} width="4" height="4" fill="#444" /></svg>
);

function StrokePanel() {
  const dash = ['guión', 'hueco', 'guión', 'hueco', 'guión', 'hueco'];
  return (
    <StrokeBody $h={482} $mb={4}>
      <Row $h={40}>
        <Label $on><Fit w={51}>Grosor:</Fit></Label>
        <ComboBox $w={130}><Spinner w={22} /><Field $bg="#a3a3a3" /><ArrowBtn><Down /></ArrowBtn></ComboBox>
      </Row>
      <Row $h={40}>
        <Label><Fit w={54}>Remate:</Fit></Label>
        <Segments>
          <Segment><Cap d="M4 3h13v12H4v-3H1V6h3z" /></Segment>
          <Segment><Cap d="M7 2h11v14H7C-2 14-2 4 7 2z" /></Segment>
          <Segment><Cap d="M0 3h18v12H0z" /></Segment>
        </Segments>
      </Row>
      <Row $h={40}>
        <Label><Fit w={51}>Vértice:</Fit></Label>
        <Segments>
          <Segment><Join d="M0 1h18v11h-5v6H0z" /></Segment>
          <Segment><Join d="M9 1h9v11h-5v6H0v-8Q1 2 9 1z" /></Segment>
          <Segment><Join d="M8 1h10v11h-5v6H0V9z" /></Segment>
        </Segments>
        <Spacer $w={10} /><Fit w={43}>Límite:</Fit><Spacer $w={8} /><Flat $w={56} /><Spacer $w={7} /><Fit w={8}>x</Fit>
      </Row>
      <Row $h={40}>
        <Label><Fit w={88}>Alinear trazo:</Fit></Label>
        <Segments><Segment><Align x={3} /></Segment><Segment><Align x={5} /></Segment><Segment><Align x={8} /></Segment></Segments>
      </Row>
      <HRule $h={8} />
      <Row $h={46}>
        <Check><svg width="13" height="3"><rect width="13" height="3" fill="#eee" /></svg></Check>
        <CheckLabel><Fit w={118}>Línea discontinua</Fit></CheckLabel>
        <Segments>
          <Segment $w={59}><svg width="44" height="18"><path d="M2 17v-5M2 8V3h6M14 2h10M30 2h12v8M36 17h6v-3M22 16h8M6 16h8" fill="none" stroke={G} strokeWidth="3" /></svg></Segment>
          <Segment $w={59}><svg width="44" height="18"><path d="M2 7V2h8M16 2h12M34 2h8v5M2 11v5h8M16 16h12M34 16h8v-5" fill="none" stroke={G} strokeWidth="3" /></svg></Segment>
        </Segments>
      </Row>
      <DashGrid>
        {dash.map((t, i) => <DashCell key={i}><Flat $w={53} /><Fit w={t === 'hueco' ? 42 : 38}>{t}</Fit></DashCell>)}
      </DashGrid>
      <HRule $h={9} />
      <Row $h={46}>
        <Label><Fit w={97}>Puntas flecha:</Fit></Label>
        <ComboBox $dim $w={82}><Field $bg="#808080" /><ArrowBtn><Down c="#999" w={9} /></ArrowBtn></ComboBox>
        <Spacer $w={17} />
        <ComboBox $dim $w={82}><Field $bg="#808080" /><ArrowBtn><Down c="#999" w={9} /></ArrowBtn></ComboBox>
        <Spacer $w={32} />
        <svg width="22" height="19"><path d="M2 5h12M20 14H8" stroke={G} strokeWidth="3" /><path d="M13 0l8 5-8 5zM8 9l-8 5 8 5z" fill={G} /></svg>
      </Row>
      <Row $h={46}>
        <Label><Fit w={47}>Escala:</Fit></Label>
        <ComboBox $dim $w={82}><Spinner w={22} c="#999" /><Field $bg="#808080"><Fit w={38}>100%</Fit></Field></ComboBox>
        <Spacer $w={17} />
        <ComboBox $dim $w={82}><Spinner w={22} c="#999" /><Field $bg="#808080"><Fit w={38}>100%</Fit></Field></ComboBox>
        <Spacer $w={30} />
        <svg width="24" height="22"><path d="M8 8V4q4-4 8 0v4M8 14v4q4 4 8 0v-4M8 8v6M16 8v6M2 4l3 2M1 11h3M2 18l3-2M22 4l-3 2M23 11h-3M22 18l-3-2" fill="none" stroke={G} strokeWidth="2.200" /></svg>
      </Row>
      <Row $h={44}>
        <Label><Fit w={51}>Alinear:</Fit></Label>
        <Segments>
          <Segment><svg width="19" height="16"><path d="M0 3h10v4M0 11h12" fill="none" stroke={G} strokeWidth="2.500" /><path d="M10 6l9 5-9 5z" fill={G} /></svg></Segment>
          <Segment><svg width="19" height="16"><path d="M0 3h18v4M0 11h10" fill="none" stroke={G} strokeWidth="2.500" /><path d="M9 6l8 5-8 5z" fill={G} /></svg></Segment>
        </Segments>
      </Row>
      <HRule $h={8} />
      <Row $h={47}>
        <Label><Fit w={39}>Perfil:</Fit></Label>
        <ComboBox $dim $w={159}><Field $bg="#808080" /><ArrowBtn><Down c="#999" w={9} /></ArrowBtn></ComboBox>
        <Spacer $w={17} />
        <svg width="20" height="17"><path d="M1 2l6 6-6 6zM10 0v17" fill="none" stroke={G} strokeDasharray="2 1" strokeWidth="1.500" /><path d="M20 1v14l-7-7z" fill={G} /></svg>
        <Spacer $w={19} />
        <svg width="17" height="22"><path d="M2 0h13L8.500 8z" fill={G} /><path d="M0 11h17M2 21h13L8.500 14z" fill="none" stroke={G} strokeDasharray="2 1" strokeWidth="1.500" /></svg>
      </Row>
    </StrokeBody>
  );
}

const LayerList = styled.div`
  margin: 10px 7px 0 8px;
  height: 570px;
  border: 1px solid #2b2b2b;
`;
const LayerRow = styled.div<{ $on?: boolean }>`
  position: relative;
  height: 32.3px;
  display: flex;
  align-items: stretch;
  background: ${p => (p.$on ? '#5a6475' : '#484848')};
  border-bottom: 2px solid #303030;
  font: 16.5px ${SEGOE};
`;
const LayerCell = styled.span<{ $w: number }>`
  width: ${p => p.$w}px;
  flex: none;
  display: flex;
  align-items: center;
  justify-content: center;
  padding-right: 2px;
  border-right: 2px solid #303030;
`;
const ColorBar = styled.i<{ $c: string }>`width: 6px; margin: 2px 1px; background: ${p => p.$c};`;
const LayerMain = styled.span`
  width: 240px;
  display: flex;
  align-items: center;
  border-left: 1px solid #303030;
  border-right: 2px solid #303030;
  padding-left: 8px;
`;
const RingCell = styled.span`display: flex; align-items: center; padding-left: 6px;`;
const Thumb = styled.span`width: 28px; height: 28px; margin: 0 8px 0 14px; border: 2px solid #000; background: #fff;`;
const Fold = styled.i`position: absolute; right: 0; top: 0; border: 4px solid transparent; border-top-color: #ddd; border-right-color: #ddd;`;
const Footer = styled.div`display: flex; align-items: center; height: 30px; padding-left: 8px; font: 16.5px ${SEGOE};`;

const THUMBS = [
  <path d="M1 9h3v3H1zM2 12h4v4H2zM13 9h4v7h-4zM18 9h6v7h-5z" fill="#ff8df8" />,
  <path d="M0 9h2v3H0zM17 9h2v3h-2z" fill="#aaa" />,
  <path d="M0 8h5v3H0zM0 13h5v5H0zM20 8h4v7h-4z" fill="#55efff" />,
  <path d="M10 12v5M8 16h6M18 13h2" stroke="#aab" strokeWidth="1.500" />,
  <path d="M0 9h24M0 16h24M12 9v7" stroke="#99a" strokeWidth="1" />,
];
function Layers() {
  const rows: [string, number, string, boolean][] = [
    ['auxiliar', 48, '#ff4f4f', false], ['texto', 34, '#ff4f4f', false], ['texto_rectángulo', 113, '#ff4fff', true],
    ['mapa/gráfico', 90, '#4f80ff', false], ['borde exterior', 95, '#4f80ff', true],
  ];
  return (
    <Panel $h={609} $mb={5}>
      <LayerList>
        {rows.map(([t, w, c, lock], i) => (
          <LayerRow key={t} $on={i === 3}>
            <LayerCell $w={33}>
              <svg width="19" height="14" viewBox="0 0 19 14"><path d="M1 7q8-11 17 0-8 10-17 0z" fill="#555" stroke="#b5b5b5" strokeWidth="1.800" /><circle cx="10" cy="6" r="3.500" fill="#222" stroke="#b5b5b5" strokeWidth="1.500" /></svg>
            </LayerCell>
            <LayerCell $w={32}>
              {lock && <svg width="13" height="17"><path d="M3 8V4q3.500-5 7 0v4" fill="none" stroke="#aaa" strokeWidth="2.500" /><rect y="7" width="13" height="10" fill="#aaa" /><rect x="5" y="10" width="3" height="3" fill="#444" /></svg>}
            </LayerCell>
            <ColorBar $c={c} />
            <LayerMain>
              <svg width="10" height="12"><path d="M0 0l10 6-10 6z" fill="#e0e0e0" /></svg>
              <Thumb><svg width="24" height="24">{THUMBS[i]}</svg></Thumb>
              <Fit w={w}>{t}</Fit>
            </LayerMain>
            <RingCell><svg width="15" height="16"><circle cx="7.500" cy="8" r="6" fill="none" stroke="#b5b5b5" strokeWidth="2" /></svg></RingCell>
            {i === 3 && <Fold />}
          </LayerRow>
        ))}
      </LayerList>
      <Footer>
        <Fit w={51}>5 capas</Fit>
        <Spacer $w={104} />
        <svg width="20" height="20"><circle cx="12" cy="8" r="6" fill="none" stroke="#6e6e6e" strokeWidth="2" /><path d="M8 13l-6 6" stroke="#6e6e6e" strokeWidth="2.500" /></svg>
        <Spacer $w={20} />
        <svg width="18" height="18"><rect x="6" y="6" width="11" height="11" fill="#585858" /><path d="M1 1h11v11H1zM6 6h6v6H6z" fill="none" stroke="#6e6e6e" strokeWidth="2" /></svg>
        <Spacer $w={21} />
        <svg width="22" height="18"><path d="M1 1v5h6M5 3l3 3-3 3" fill="none" stroke="#ccc" strokeWidth="2" /><path d="M10 2h12v14h-6v-5h-6z" fill="#bbb" /><path d="M10 12h4v4z" fill="#ddd" /></svg>
        <Spacer $w={21} />
        <svg width="16" height="18"><path d="M0 1h16v16H8v-7H0z" fill="#bbb" /><path d="M1 11h6v6z" fill="#ddd" /></svg>
        <Spacer $w={22} />
        <svg width="18" height="19"><path d="M1 4h16M6 3V1h6v2M3 7v11h12V7M7 7v10M11 7v10" fill="none" stroke="#bbb" strokeWidth="2" /></svg>
        <Spacer $w={25} />
        <svg width="16" height="16"><path d="M15 0v16M12 4v12M9 7v9M6 10v6M3 13v3" stroke="#888" strokeWidth="1.500" strokeDasharray="1.500 1.500" /></svg>
      </Footer>
    </Panel>
  );
}

const ColorPanel = styled.div`
  height: 273px;
  background: #484848;
  padding: 11px 26px 0 8px;
`;
const SwatchRow = styled.div`display: flex; align-items: center; height: 29px; margin-bottom: 11px;`;
const Chips = styled.span`display: flex; border: 1px solid #222; background: #222; gap: 1px;`;
const Chip = styled.i<{ $c: string }>`width: 19px; height: 19px; background: ${p => p.$c};`;
const Hex = styled.span`
  width: 82px;
  height: 29px;
  border: 2px solid #2a2a2a;
  background: #a3a3a3;
  color: #111;
  display: flex;
  align-items: center;
  padding-left: 6px;
  font: 16.5px ${SEGOE};
`;
const Spectrum = styled.div`
  width: 348px;
  height: 212px;
  margin-left: 1px;
  border: 2px solid #2a2a2a;
  border-top-width: 1px;
  background:
    linear-gradient(#fff, rgba(255, 255, 255, 0) 50%, rgba(0, 0, 0, 0) 50%, #000),
    linear-gradient(90deg, #f00, #ff0 17%, #0f0 34%, #0ff 50%, #00f 67%, #f0f 84%, #f00);
`;

function RightDock() {
  return (
    <Dock>
      <DockHead><svg width="12" height="9"><path d="M0 0l6 4.500L0 9zM6 0l6 4.500L6 9z" fill="#c8c8c8" /></svg></DockHead>
      <TabStrip tabs={[
        { t: 'Trazo', w: 71, tw: 40, pad: 7, on: true, knob: true }, { t: 'Degrad', w: 62, tw: 49, pad: 11 },
        { t: 'Transpa', w: 62, tw: 56, pad: 10 }, { t: 'Alinear', w: 61, tw: 49, pad: 10 }, { t: 'Buscatra', w: 67, tw: 59, pad: 11 },
      ]} />
      <StrokePanel />
      <TabStrip tabs={[
        { t: 'Mesas c', w: 66, tw: 54, pad: 11 }, { t: 'Capas', w: 62, tw: 41, pad: 9, on: true },
        { t: 'Enlaces', w: 64, tw: 51, pad: 11 }, { t: 'Muestra', w: 64, tw: 56, pad: 11 }, { t: 'Estilos g', w: 67, tw: 56, pad: 11 },
      ]} />
      <Layers />
      <TabStrip tabs={[
        { t: 'Color', w: 71, tw: 39, pad: 7, on: true, knob: true }, { t: 'Párrafo', w: 73, tw: 52, pad: 11 },
        { t: 'OpenType', w: 94, tw: 73, pad: 10 }, { t: 'Carácter', w: 81, tw: 58, pad: 10 },
      ]} />
      <ColorPanel>
        <SwatchRow>
          <Chips><NoneSwatch w={19} h={19} /><Chip $c="#000" /><Chip $c="#fff" /></Chips>
          <Spacer $w={188} /><Fit w={11}>#</Fit><Spacer $w={6} />
          <Hex><Fit w={46}>2d3f56</Fit></Hex>
        </SwatchRow>
        <Spectrum />
      </ColorPanel>
    </Dock>
  );
}

/* ---------- taskbar ---------- */

const Taskbar = styled.footer`
  height: 77px;
  background: #20170f;
  display: flex;
  font: 24px ${SEGOE};
  color: #f2f2f2;
`;
const Slot = styled.span<{ $w?: number }>`
  width: ${p => p.$w ?? 95.36}px;
  flex: none;
  display: flex;
  align-items: center;
  justify-content: center;
`;
const Running = styled(Slot)`
  box-shadow: inset 0 -5px #76b9ed;
  width: 79px;
  margin: 0 8.18px;
`;
const ActiveSlot = styled(Slot)`background: #4e463f; box-shadow: inset 0 -5px #76b9ed;`;
const Adobe = styled.span<{ $c: string; $bg: string }>`
  width: 44px;
  height: 42px;
  margin-bottom: 3px;
  border: 3px solid ${p => p.$c};
  background: ${p => p.$bg};
  color: ${p => p.$c};
  font: 700 24px/34px ${SEGOE};
  text-align: center;
`;
const Tray = styled.div`display: flex; margin-left: auto;`;
const Clock = styled.span`
  width: 146px;
  display: flex;
  flex-direction: column;
  align-items: center;
  justify-content: center;
  gap: 7px;
  padding-top: 1px;
`;
const Notice = styled.span`
  position: relative;
  width: 86px;
  display: flex;
  align-items: center;
  justify-content: center;
`;
const Count = styled.b`
  position: absolute;
  left: 34px;
  top: 38px;
  width: 31px;
  height: 31px;
  border: 2px solid #777;
  border-radius: 50%;
  background: #333;
  font: 700 20px/26px ${SEGOE};
  text-align: center;
`;
const ShowDesktop = styled.i`width: 9px; margin-left: 4px; border-left: 1px solid #7a746e;`;

const Qgis = () => (
  <svg width="38" height="44" viewBox="0 0 38 44">
    <ellipse cx="17" cy="21" rx="11" ry="14" fill="none" stroke="#eef07a" strokeWidth="6" />
    <path d="M13 29q8 0 12 8 3 3 8-1-3 8-9 7-7-3-8-9z" fill="#eef07a" />
    <path d="M22 22Q20 7 35 1q2 13-8 19l-9 12z" fill="#1c8a1c" />
  </svg>
);
const ICONS = {
  start: <svg width="32" height="32"><path d="M0 5l13-2v12H0zM15 2.500L32 0v15H15zM0 17h13v12L0 27zM15 17h17v15l-17-2.500z" fill="#fff" /></svg>,
  view: <svg width="32" height="32"><path d="M1 2v5h18V2M1 11h18v12H1zM1 31v-4h18v4M27 1v30" fill="none" stroke="#fff" strokeWidth="2" /><rect x="25" y="10" width="5" height="5" fill="#fff" /></svg>,
  viewer: <svg width="46" height="47"><rect width="46" height="47" rx="2" fill="#0d7fe4" /><circle cx="23" cy="23.500" r="20" fill="#fff" /><path d="M6 23.500l10-8v5h14v-5l10 8-10 8v-5H16v5z" fill="#0d6bcf" /></svg>,
  whats: (
    <svg width="42" height="42" viewBox="0 0 42 42"><path d="M1 41l3-11A20 20 0 1 1 12 38z" fill="#fff" /><circle cx="21.500" cy="20.500" r="16.500" fill="#2cb742" />
      <g transform="translate(12 11)"><g transform="matrix(-1 0 0 1 19 0)"><FaPhoneAlt size={19} color="#fff" /></g></g></svg>
  ),
  folder: <svg width="42" height="36"><path d="M0 0h16l4 5h22v29H0z" fill="#f7cf57" /><path d="M3 7h39v27H0V9z" fill="#ffe793" /><path d="M7 35V18h28v17h-7v-9H15v9z" fill="#39b0e8" /><circle cx="5" cy="4" r="2" fill="#fff" /></svg>,
  cmd: <svg width="44" height="35"><rect width="44" height="35" fill="#8d8f93" /><rect x="2" y="6" width="40" height="27" fill="#222428" /><path d="M2 2h40v3H2z" fill="#b8babd" /><text x="6" y="17" fill="#ccc" fontSize="10" fontFamily="Liberation Mono, monospace">C:\_</text></svg>,
  portrait: <svg width="45" height="46"><rect width="45" height="46" fill="#1c1c1c" /><path d="M12 4l8 12 6-12 8 12 6-8 5 4v18l-8 12-4 4-8-8-10-6L4 14z" fill="#e5e5e5" /><path d="M4 0l12 14 2 12M28 6l-4 14M38 10l-6 14 4 10" fill="none" stroke="#444" strokeWidth="2" /><path d="M0 18l20 28H0z" fill="#333" /><circle cx="22" cy="26" r="2" fill="#e33" /><path d="M0 20l10 8-6 8z" fill="#888" /></svg>,
  android: <svg width="44" height="46"><rect width="44" height="46" fill="#8a8a8e" /><path d="M12 0v10M22 0v6M4 14h8" stroke="#222" strokeWidth="4" /><rect x="0" y="36" width="44" height="10" fill="#6a6a6e" /><path d="M2 45V36q4-11 20-11t20 11v9z" fill="#9fc037" stroke="#fff" strokeWidth="2" /><path d="M9 20l6 9M35 20l-6 9" stroke="#dfe9c0" strokeWidth="3" /><circle cx="14" cy="37" r="2" fill="#fff" /><circle cx="30" cy="37" r="2" fill="#fff" /></svg>,
  knot: <svg width="42" height="40" viewBox="0 0 42 40"><path d="M12 3l9-3 9 3v8H12zM12 29h18v8l-9 3-9-3z" fill="#d8222c" stroke="#999" strokeWidth="1.500" /><path d="M2 14q6-7 12-4l14 16V10l9 2q5 8 0 16-7 6-12 2L13 15v15l-9-2q-5-7-2-14z" fill="#3c3c3e" stroke="#8f8f8f" strokeWidth="2" /></svg>,
  blender: <svg width="44" height="38"><path d="M20 1l20 15-6 8L0 30l16-13H5v-4h18z" fill="#f5792a" /><circle cx="28" cy="22" r="15" fill="#f5792a" /><circle cx="28" cy="22" r="9" fill="#fff" /><circle cx="28" cy="22" r="5" fill="#265787" /></svg>,
  atom: <svg width="46" height="46"><defs><linearGradient id="at" x2="0" y2="1"><stop stopColor="#8ed68f" /><stop offset="1" stopColor="#129a75" /></linearGradient></defs><circle cx="23" cy="23" r="23" fill="url(#at)" /><g fill="none" stroke="#fff" strokeWidth="1.500"><ellipse cx="23" cy="23" rx="16" ry="6" transform="rotate(10 23 23)" /><ellipse cx="23" cy="23" rx="16" ry="6" transform="rotate(70 23 23)" /><ellipse cx="23" cy="23" rx="16" ry="6" transform="rotate(-50 23 23)" /></g><circle cx="23" cy="23" r="2" fill="#fff" /></svg>,
  bird: <svg width="44" height="46"><path d="M42 0Q30 8 27 24l7 4q8-12 8-28z" fill="#c8c8c8" /><ellipse cx="25" cy="30" rx="15" ry="9" fill="none" stroke="#6a8420" strokeWidth="3" /><path d="M13 32q3-14 16-18l6 6-4 16q-10 6-18-4z" fill="#b0605d" /><path d="M14 34L0 45l14-1z" fill="#aaa" /></svg>,
  chrome: <svg width="44" height="42" viewBox="-22 -21 44 42"><circle r="21" fill="#fcd04b" /><path d="M-18.200-10.500L-9 6 0 9-2 21A21 21 0 0 1-18.200-10.500z" fill="#1da361" /><path d="M-18.200-10.500A21 21 0 0 1 18.200-10.500L0-9-9 5z" fill="#dd4b3e" /><circle r="10.500" fill="#fff" /><circle r="8" fill="#4a8af4" /></svg>,
  note: <svg width="36" height="35"><path d="M0 0h36v35H0z" fill="#fff" /><path d="M18 35V18h17z" fill="#20170f" /><path d="M0 0h36v2H0z" fill="#888" /></svg>,
};

function TaskBar() {
  return (
    <Taskbar>
      <Slot $w={94}>{ICONS.start}</Slot>
      <Slot $w={91}>{ICONS.view}</Slot>
      <Spacer $w={4.5} />
      <Slot>{ICONS.viewer}</Slot>
      <Slot>{ICONS.whats}</Slot>
      <Running>{ICONS.folder}</Running>
      <Slot>{ICONS.cmd}</Slot>
      <Slot>{ICONS.portrait}</Slot>
      <Slot>{ICONS.android}</Slot>
      <Slot><Qgis /></Slot>
      <Slot><Adobe $c="#e8359b" $bg="#3a0a22">Id</Adobe></Slot>
      <Slot><Adobe $c="#7ab8ef" $bg="#0a0f50">Ps</Adobe></Slot>
      <ActiveSlot><Adobe $c="#f0981e" $bg="#2c1a08">Ai</Adobe></ActiveSlot>
      <Slot>{ICONS.knot}</Slot>
      <Slot>{ICONS.blender}</Slot>
      <Slot>{ICONS.atom}</Slot>
      <Slot>{ICONS.bird}</Slot>
      <Running>{ICONS.chrome}</Running>
      <Running><FaSpotify size={44} color="#1ed760" /></Running>
      <Running>{ICONS.note}</Running>
      <Running><Qgis /></Running>
      <Tray>
        <Slot $w={46}><svg width="30" height="30"><g fill="none" stroke="#fff" strokeWidth="2"><circle cx="20" cy="6" r="5" /><circle cx="10" cy="16" r="4.500" /><path d="M2 29q0-8 8-8t8 8M14 13q6-4 12 2l2 5" /></g></svg></Slot>
        <Spacer $w={23} />
        <Slot $w={46}><svg width="24" height="14"><path d="M1 13L12 2l11 11" fill="none" stroke="#fff" strokeWidth="2" /></svg></Slot>
        <Slot $w={46}><svg width="28" height="20"><path d="M7 4h20v13H8" fill="none" stroke="#fff" strokeWidth="2" /><rect x="11" y="7" width="13" height="8" fill="#fff" /><path d="M4 1v4M1 5h6v4H1zM4 9v10" stroke="#fff" strokeWidth="2" fill="none" /></svg></Slot>
        <Slot $w={46}><svg width="32" height="26"><path d="M2 18Q-1 8 7 7q5-9 12-3 8 0 9 8 4 6-2 8H6z" fill="#f4f4f4" /><circle cx="21" cy="17" r="9" fill="#fff" /><path d="M15 17a6 6 0 0 1 11-3M27 17a6 6 0 0 1-11 3" stroke="#1d62c9" strokeWidth="3" fill="none" /></svg></Slot>
        <Slot $w={47}><svg width="24" height="24"><g fill="none" stroke="#eee" strokeWidth="2"><path d="M1 23Q1 3 23 1M7 23Q7 9 23 7M13 23q0-9 10-10" /></g><circle cx="20" cy="20" r="2.500" fill="#fff" /></svg></Slot>
        <Slot $w={45}><svg width="32" height="26"><path d="M1 9h5l6-6v20l-6-6H1z" fill="none" stroke="#fff" strokeWidth="2" /><path d="M17 9q3 4 0 8M21 6q5 7 0 14" fill="none" stroke="#ddd" strokeWidth="2" /><path d="M26 2q7 11 0 22" fill="none" stroke="#888" strokeWidth="2" /></svg></Slot>
        <Slot $w={68}><Fit w={40}>CAT</Fit></Slot>
        <Clock><Fit w={52}>12:41</Fit><Fit w={117}>05/07/2018</Fit></Clock>
        <Notice>
          <svg width="46" height="32" viewBox="0 0 46 32"><path d="M0 0h31v24H15l-4 6v-6H0z" fill="#fff" /><path d="M6 7h20M6 13h20M6 19h14" stroke="#20170f" strokeWidth="2" /></svg>
          <Count>3</Count>
        </Notice>
        <ShowDesktop />
      </Tray>
    </Taskbar>
  );
}

export default function App() {
  return (
    <Page>
      <Global />
      <Heading><Fit w={740}>aplicar máscara</Fit></Heading>
      <Screen>
        <Desk>
          <AppWindow>
            <Menu />
            <Controls />
            <Body>
              <Document>
                <TabBar>
                  <DocTab $w={526} $on>
                    <Fit w={472}>plantilla_mapas y gráficos.ai* al 66.67% (RGB/Previsualizar)</Fit>
                    <svg width="9" height="10"><path d="M1 1l7 8M8 1L1 9" stroke="#ccc" strokeWidth="2" /></svg>
                  </DocTab>
                  <DocTab $w={485}>
                    <Fit w={430}>illustrator_snapshots.ai* al 66.67% (RGB/Previsualizar)</Fit>
                    <svg width="9" height="10"><path d="M1 1l7 8M8 1L1 9" stroke="#ccc" strokeWidth="2" /></svg>
                  </DocTab>
                </TabBar>
                <CanvasRow>
                  <CanvasArea />
                  <VScroll><Up w={14} /><VThumb /><Down w={14} /></VScroll>
                </CanvasRow>
                <StatusBar>
                  <StatusField $w={66}><Fit w={51}>66.67%</Fit></StatusField>
                  <ArrowBtn><Down /></ArrowBtn>
                  <StatusCell $w={40}><SideArrow left bar c="#777" /></StatusCell>
                  <StatusCell $w={22}><SideArrow left c="#777" /></StatusCell>
                  <Spacer $w={4} />
                  <StatusField $w={64}><Fit w={8}>1</Fit></StatusField>
                  <ArrowBtn $w={25}><Down /></ArrowBtn>
                  <StatusCell $w={38}><SideArrow /></StatusCell>
                  <StatusCell $w={24}><SideArrow bar /></StatusCell>
                  <StatusCell $w={307} $line><Fit w={63}>Selección</Fit></StatusCell>
                  <StatusCell $w={31} $line><SideArrow /></StatusCell>
                  <HScroll><SideArrow left /><HThumb /><SideArrow /></HScroll>
                  <Corner />
                </StatusBar>
              </Document>
              <RightDock />
            </Body>
          </AppWindow>
        </Desk>
        <TaskBar />
      </Screen>
    </Page>
  );
}
